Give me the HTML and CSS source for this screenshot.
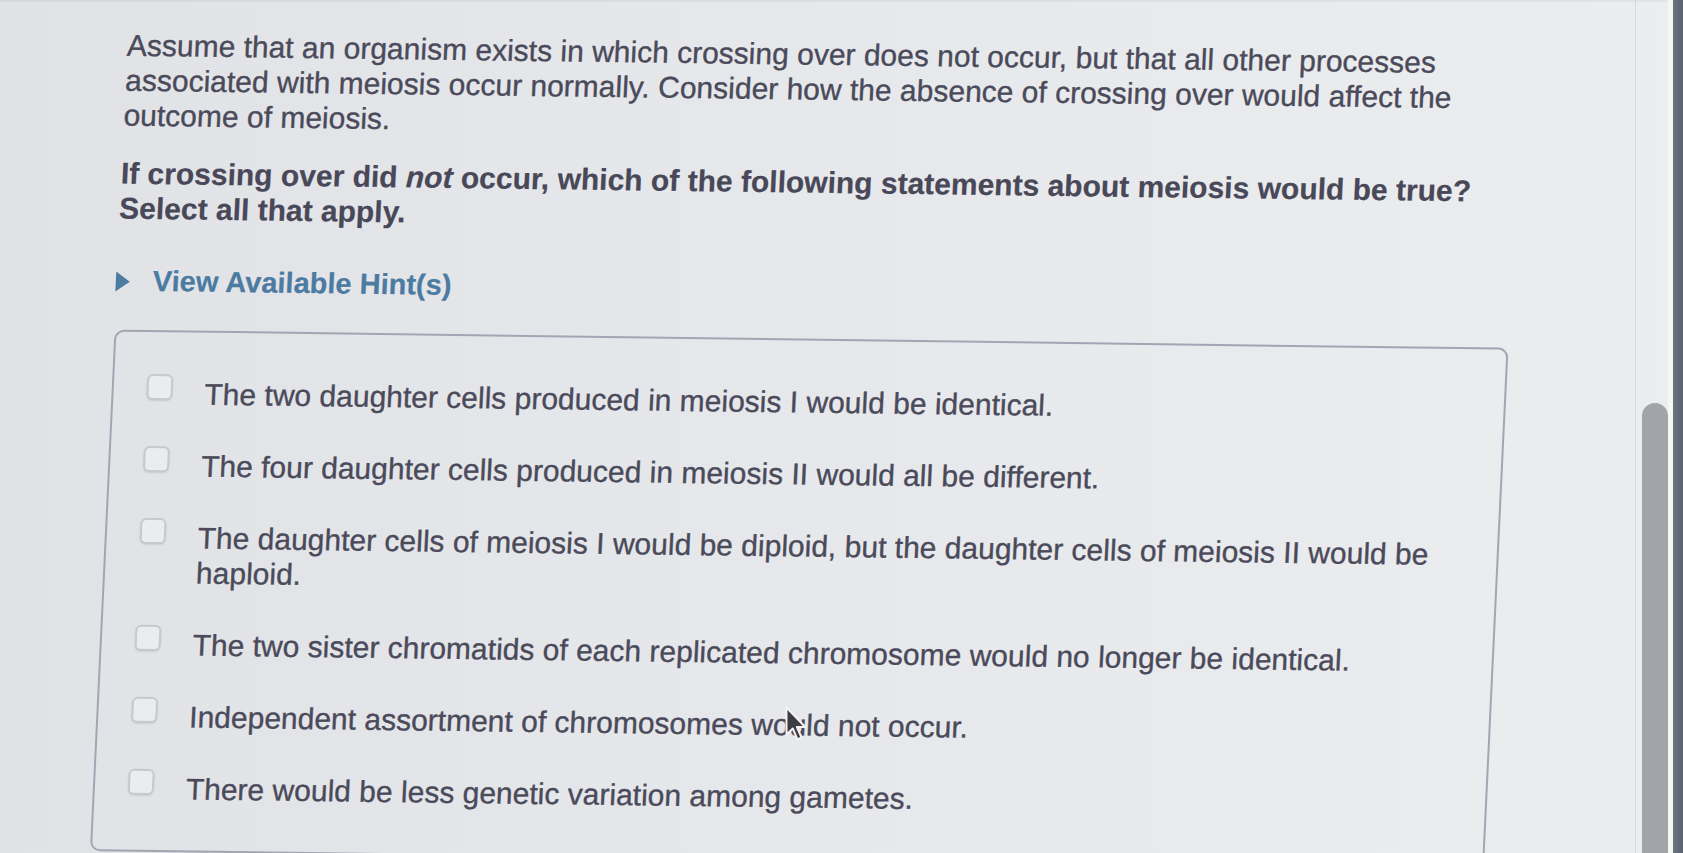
FILE: index.html
```html
<!DOCTYPE html>
<html lang="en">
<head>
<meta charset="utf-8">
<title>Crossing over question</title>
<link rel="stylesheet" href="styles.css">
</head>
<body>
<div class="main">
  <p class="intro">Assume that an organism exists in which crossing over does not occur, but that all other processes associated with meiosis occur normally. Consider how the absence of crossing over would affect the outcome of meiosis.</p>
  <p class="question">If crossing over did <em>not</em> occur, which of the following statements about meiosis would be true?<br>Select all that apply.</p>
  <div class="hint"><span class="tri"></span><span class="hint-text">View Available Hint(s)</span></div>
  <div class="options">
    <label class="opt"><span class="cb"></span><span class="txt">The two daughter cells produced in meiosis I would be identical.</span></label>
    <label class="opt"><span class="cb"></span><span class="txt">The four daughter cells produced in meiosis II would all be different.</span></label>
    <label class="opt"><span class="cb"></span><span class="txt">The daughter cells of meiosis I would be diploid, but the daughter cells of meiosis II would be haploid.</span></label>
    <label class="opt"><span class="cb"></span><span class="txt">The two sister chromatids of each replicated chromosome would no longer be identical.</span></label>
    <label class="opt"><span class="cb"></span><span class="txt">Independent assortment of chromosomes would not occur.</span></label>
    <label class="opt"><span class="cb"></span><span class="txt">There would be less genetic variation among gametes.</span></label>
  </div>
</div>
<div class="side">
  <div class="gutter"></div>
  <div class="track"><div class="thumb"></div></div>
  <div class="shine"></div>
  <div class="bezel"></div>
</div>
<svg class="cursor" width="24" height="36" viewBox="0 0 16 24" aria-hidden="true">
  <path d="M1 1 L1 19 L5.2 15 L8.3 22.2 L11 21 L7.9 14 L13.5 14 Z" fill="#3c3c44" stroke="#f4f4f6" stroke-width="1.3" stroke-linejoin="round"/>
</svg>
</body>
</html>
```
FILE: styles.css
```css
html, body {
  margin: 0;
  padding: 0;
}
body {
  width: 1683px;
  height: 853px;
  overflow: hidden;
  display: flex;
  position: relative;
  background: linear-gradient(to right, #e1e2e6 0%, #e7e8eb 50%, #ecedef 100%);
  box-shadow: inset 0 3px 3px -2px rgba(0, 0, 0, 0.08);
  font-family: "Liberation Sans", Arial, Helvetica, sans-serif;
  color: #4a4a5a;
}
.main {
  width: 1635px;
  flex: none;
  box-sizing: border-box;
  padding: 26px 0 0 129px;
  transform-origin: 0 0;
  transform: skewY(0.75deg) skewX(-2.7deg);
}
.intro, .question {
  margin: 0;
  width: 1394px;
  font-size: 30px;
  line-height: 35px;
  -webkit-text-stroke: 0.35px currentColor;
}
.question {
  margin-top: 23px;
  font-weight: bold;
  color: #484858;
  -webkit-text-stroke: 0.2px currentColor;
}
.question em {
  font-style: italic;
}
.hint {
  margin-top: 38px;
  display: flex;
  align-items: center;
  height: 35px;
}
.tri {
  width: 0;
  height: 0;
  border-left: 14px solid #4c7ba2;
  border-top: 10px solid transparent;
  border-bottom: 10px solid transparent;
  margin-right: 23px;
}
.hint-text {
  font-size: 29px;
  font-weight: bold;
  color: #4c7ba2;
  line-height: 35px;
  -webkit-text-stroke: 0.2px currentColor;
}
.options {
  margin-top: 31px;
  margin-left: 1px;
  width: 1394px;
  box-sizing: border-box;
  border: 2px solid #a3a5b3;
  border-radius: 10px;
  padding: 44px 40px 44px 33px;
  display: flex;
  flex-direction: column;
  gap: 37px;
}
.opt {
  display: flex;
  align-items: flex-start;
  font-size: 30px;
  line-height: 35px;
  -webkit-text-stroke: 0.35px currentColor;
}
.cb {
  flex: none;
  width: 26px;
  height: 26px;
  box-sizing: border-box;
  border: 2px solid #c8c9ce;
  border-radius: 6px;
  background: #ebeced;
  box-shadow: 0 1px 2px rgba(0, 0, 0, 0.1);
  margin-top: -2px;
  margin-right: 32px;
  -webkit-text-stroke: 0;
}
.txt {
  flex: 1;
}
.side {
  flex: none;
  width: 48px;
  height: 853px;
  display: flex;
  border-left: 1px solid #d7d8dc;
  box-sizing: border-box;
}
.gutter {
  width: 6px;
  flex: none;
}
.track {
  width: 26px;
  flex: none;
  padding-top: 403px;
}
.thumb {
  height: 460px;
  background: #a1a4a8;
  border-radius: 13px 13px 0 0;
}
.shine {
  width: 5px;
  flex: none;
  background: #f6f6f2;
}
.bezel {
  flex: 1;
  background: linear-gradient(to right, #6b7480, #58616d);
}
.cursor {
  position: absolute;
  left: 785px;
  top: 706px;
}
```
